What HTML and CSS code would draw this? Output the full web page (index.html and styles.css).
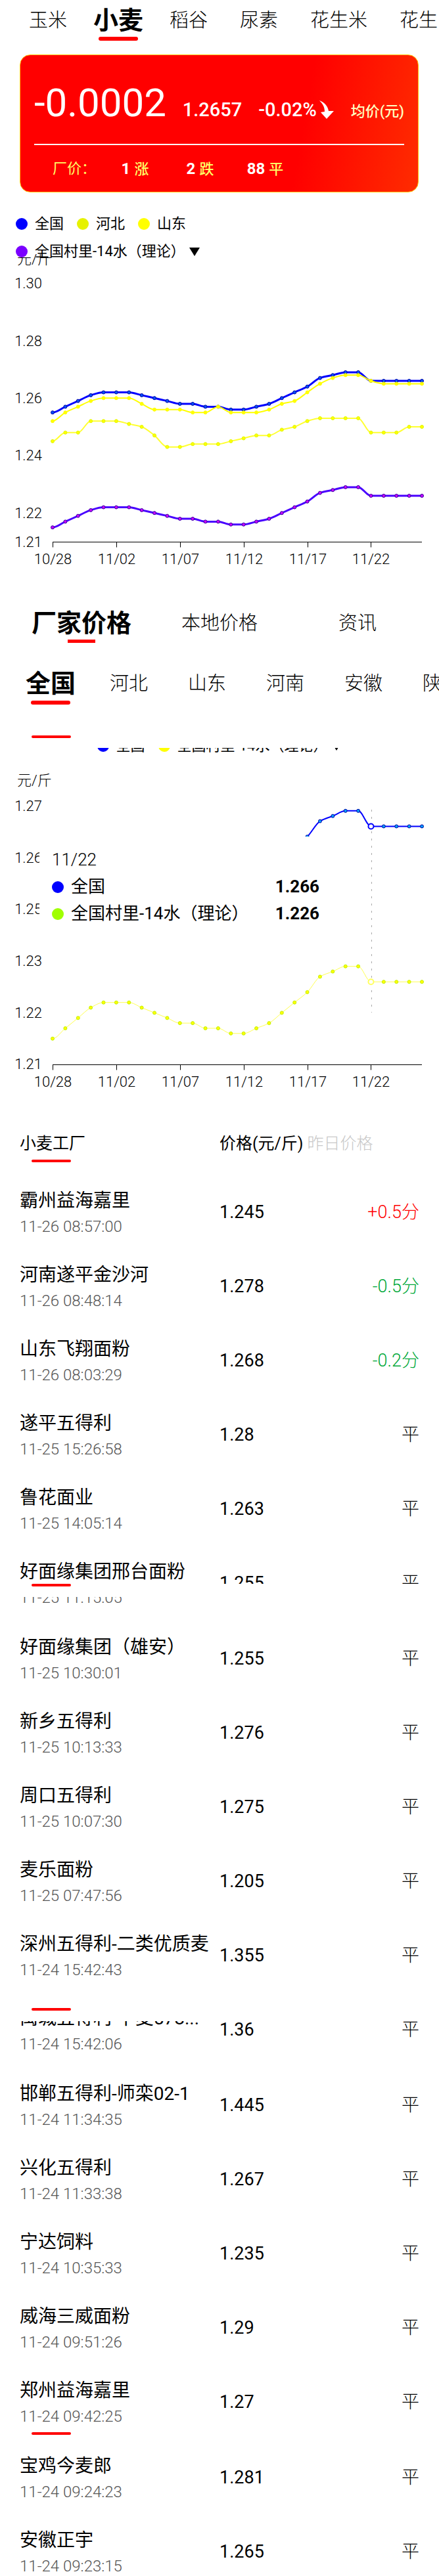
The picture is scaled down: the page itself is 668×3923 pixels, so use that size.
FILE: index.html
```
<!DOCTYPE html>
<html lang="zh-CN">
<head>
    <meta charset="UTF-8">
    <meta name="viewport" content="width=device-width, initial-scale=1.0">
    <title>小麦价格</title>
    <link rel="stylesheet" href="styles.css">
</head>
<body>
    <nav class="crops">
        <a href="#">玉米</a>
        <a href="#" class="active">小麦</a>
        <a href="#">稻谷</a>
        <a href="#">尿素</a>
        <a href="#">花生米</a>
        <a href="#">花生</a>
    </nav>

    <section class="card">
        <div class="card-main">
            <span class="change">-0.0002</span>
            <span class="figure">1.2657</span>
            <span class="figure">-0.02%<svg class="arrow" viewBox="0 0 24 28"><path d="M1 0C9 3 14 9 15 16L23 16L12 28L3 18L9 17C9 10 6 5 1 0Z" fill="#fff"/></svg></span>
            <span class="unit">均价(元)</span>
        </div>
        <div class="card-sub">
            <span class="label">厂价：</span>
            <span class="count"><b>1</b>涨</span>
            <span class="count"><b>2</b>跌</span>
            <span class="count"><b>88</b>平</span>
        </div>
    </section>

    <div class="legend">
        <div class="legend-row">
            <span class="key"><i class="dot blue"></i>全国</span>
            <span class="key"><i class="dot lemon"></i>河北</span>
            <span class="key"><i class="dot yellow"></i>山东</span>
        </div>
        <div class="legend-row">
            <span class="key"><i class="dot purple"></i>全国村里-14水（理论）</span>
            <span class="more"></span>
        </div>
    </div>
    <div class="chart chart-first">
        <svg id="chart1" viewBox="0 0 668 483"></svg>
    </div>

    <div class="tabs">
        <button type="button" class="active">厂家价格</button>
        <button type="button">本地价格</button>
        <button type="button">资讯</button>
    </div>

    <nav class="regions">
        <a href="#" class="active">全国</a>
        <a href="#">河北</a>
        <a href="#">山东</a>
        <a href="#">河南</a>
        <a href="#">安徽</a>
        <a href="#">陕西</a>
    </nav>
    <div class="bar bar-alone"></div>

    <div class="legend-strip">
        <div class="legend-row">
            <span class="key"><i class="dot blue"></i>全国</span>
            <span class="key"><i class="dot yellow"></i>全国村里-14水（理论）</span>
            <span class="more"></span>
        </div>
    </div>
    <div class="chart chart-second">
        <svg id="chart2" viewBox="0 0 668 500"></svg>
        <div class="tooltip">
            <div>11/22</div>
            <div class="tip-row"><i class="dot blue"></i>全国<b>1.266</b></div>
            <div class="tip-row"><i class="dot green"></i>全国村里-14水（理论）<b>1.226</b></div>
        </div>
    </div>

    <table class="prices">
        <thead>
            <tr>
                <th class="col-name">小麦工厂<div class="bar"></div></th>
                <th class="col-price">价格(元/斤)</th>
                <th class="col-change">昨日价格</th>
            </tr>
        </thead>
        <tbody>
            <tr><td>霸州益海嘉里<small>11-26 08:57:00</small></td><td>1.245</td><td class="up">+0.5分</td></tr>
            <tr><td>河南遂平金沙河<small>11-26 08:48:14</small></td><td>1.278</td><td class="down">-0.5分</td></tr>
            <tr><td>山东飞翔面粉<small>11-26 08:03:29</small></td><td>1.268</td><td class="down">-0.2分</td></tr>
            <tr><td>遂平五得利<small>11-25 15:26:58</small></td><td>1.28</td><td>平</td></tr>
            <tr><td>鲁花面业<small>11-25 14:05:14</small></td><td>1.263</td><td>平</td></tr>
            <tr class="page-break">
                <td>好面缘集团邢台面粉<small>11-25 11:15:05</small><div class="seam seam-middle"><div class="bar"></div></div></td>
                <td>1.255</td><td>平</td>
            </tr>
            <tr><td>好面缘集团（雄安）<small>11-25 10:30:01</small></td><td>1.255</td><td>平</td></tr>
            <tr><td>新乡五得利<small>11-25 10:13:33</small></td><td>1.276</td><td>平</td></tr>
            <tr><td>周口五得利<small>11-25 10:07:30</small></td><td>1.275</td><td>平</td></tr>
            <tr><td>麦乐面粉<small>11-25 07:47:56</small></td><td>1.205</td><td>平</td></tr>
            <tr><td>深州五得利-二类优质麦<small>11-24 15:42:43</small></td><td>1.355</td><td>平</td></tr>
            <tr class="page-break">
                <td>禹城五得利-中麦578...<small>11-24 15:42:06</small><div class="seam seam-top"><div class="bar"></div></div></td>
                <td>1.36</td><td>平</td>
            </tr>
            <tr><td>邯郸五得利-师栾02-1<small>11-24 11:34:35</small></td><td>1.445</td><td>平</td></tr>
            <tr><td>兴化五得利<small>11-24 11:33:38</small></td><td>1.267</td><td>平</td></tr>
            <tr><td>宁达饲料<small>11-24 10:35:33</small></td><td>1.235</td><td>平</td></tr>
            <tr><td>威海三威面粉<small>11-24 09:51:26</small></td><td>1.29</td><td>平</td></tr>
            <tr class="page-break">
                <td>郑州益海嘉里<small>11-24 09:42:25</small><div class="seam seam-bottom"><div class="bar"></div></div></td>
                <td>1.27</td><td>平</td>
            </tr>
            <tr><td>宝鸡今麦郎<small>11-24 09:24:23</small></td><td>1.281</td><td>平</td></tr>
            <tr class="last"><td>安徽正宇<small>11-24 09:23:15</small></td><td>1.265</td><td>平</td></tr>
        </tbody>
    </table>

    <script src="charts.js"></script>
</body>
</html>
```
FILE: styles.css
```
*{
    box-sizing: border-box;
}
body{
    margin: 0;
    background-color: #fff;
    color: #000;
    font-family: Roboto, "Noto Sans CJK SC", sans-serif;
    font-size: 22px;
    overflow-x: hidden;
}
a{
    color: #000;
    text-decoration: none;
}
.bar{
    width: 60px;
    height: 4px;
    border-radius: 2px;
    background-color: #ff0000;
}

/* top menu and region menu */
.crops, .regions{
    display: flex;
    overflow: hidden;
    white-space: nowrap;
    font-size: 29px;
    font-weight: 300;
}
.crops{
    gap: 49px;
    height: 62px;
    padding-left: 44px;
    line-height: 62px;
}
.regions{
    gap: 61px;
    height: 63px;
    margin-top: 31px;
    padding-left: 48px;
    line-height: 62px;
}
.crops a, .regions a, .tabs button{
    flex-shrink: 0;
    position: relative;
}
.crops .active, .regions .active, .tabs .active{
    font-size: 38px;
    font-weight: 700;
}
.crops .active, .regions .active{
    height: 100%;
    margin: 0 -9px;
}
.active::after{
    content: "";
    position: absolute;
    left: 50%;
    bottom: 0;
    width: 60px;
    height: 6px;
    margin-left: -30px;
    border-radius: 3px;
    background-color: #ff0000;
}

/* price card */
.card{
    height: 210px;
    margin: 21px 31px 0 30px;
    padding: 43px 21px 0;
    border: 1px solid #ffc400;
    border-radius: 16px;
    background: linear-gradient(100deg, #ff0000 70%, #ff2c00);
    color: #fff;
}
.card-main{
    display: flex;
    justify-content: space-between;
    align-items: baseline;
    padding-bottom: 19px;
    border-bottom: 2px solid #fff;
    line-height: 60px;
    white-space: nowrap;
}
.change{
    font-size: 60px;
}
.figure{
    font-size: 29px;
    font-weight: 500;
}
.arrow{
    width: 24px;
    height: 28px;
    margin-left: 3px;
    vertical-align: -4px;
}
.unit{
    font-weight: 500;
    color: #ffffc0;
}
.card-sub{
    display: flex;
    margin-top: 20px;
    padding-left: 28px;
    line-height: 32px;
    color: #ffff66;
}
.label{
    margin-right: 10px;
}
.count{
    width: 99px;
    text-align: center;
    font-weight: 500;
}
.count b{
    margin-right: 6px;
    font-size: 24px;
    color: #fff;
}

/* legends */
.legend{
    margin-top: 27px;
    padding-left: 24px;
}
.legend-row{
    display: flex;
    align-items: center;
    gap: 20px;
    line-height: 42px;
    white-space: nowrap;
}
.key{
    display: flex;
    align-items: center;
}
.dot{
    flex-shrink: 0;
    width: 18px;
    height: 18px;
    margin-right: 11px;
    border-radius: 50%;
}
.blue{ background-color: #0000ff; }
.lemon{ background-color: #e6f200; }
.yellow{ background-color: #ffff00; }
.green{ background-color: #a0ff00; }
.purple{ background-color: #7a00ff; }
.more{
    margin-left: -14px;
    border: 8px solid transparent;
    border-top: 13px solid #000;
    border-bottom: 0;
}
.legend-strip{
    display: flex;
    justify-content: center;
    align-items: flex-end;
    height: 18px;
    margin-top: 15px;
    overflow: hidden;
}

/* charts */
.chart{
    position: relative;
}
.chart svg{
    display: block;
    width: 100%;
    overflow: hidden;
}
.chart text{
    font-size: 22px;
    font-weight: 300;
}
.chart-first{
    margin-top: -17px;
}
.tooltip{
    position: absolute;
    top: 117px;
    left: 60px;
    width: 480px;
    padding: 15px 54px 0 19px;
    background-color: #fff;
    font-size: 26px;
    font-weight: 300;
    line-height: 41px;
}
.tip-row{
    display: flex;
    align-items: center;
    font-weight: 400;
}
.tip-row b{
    margin-left: auto;
}

/* tabs */
.tabs{
    display: grid;
    grid-template-columns: repeat(3, 1fr);
    margin-top: 48px;
    padding: 0 19px;
}
.tabs button{
    height: 61px;
    padding: 0;
    border: none;
    background: none;
    color: #000;
    font: 300 29px/60px Roboto, "Noto Sans CJK SC", sans-serif;
}
.tabs .active::after{
    width: 42px;
    height: 5px;
    margin-left: -21px;
    border-radius: 0;
}
.bar-alone{
    margin: 47px 0 0 48px;
}

/* price list */
.prices{
    width: 100%;
    margin-top: 38px;
    border-collapse: collapse;
    table-layout: fixed;
    font-size: 27px;
}
.prices tr{
    position: relative;
    height: 113px;
}
.prices thead tr{
    height: 94px;
}
.prices .page-break{
    height: 115px;
}
.prices .last{
    height: 94px;
}
.prices th{
    padding: 27px 0 0;
    font-size: 25px;
    font-weight: 400;
    line-height: 40px;
    text-align: left;
    vertical-align: top;
    white-space: nowrap;
}
.prices td{
    padding: 37px 0 0;
    line-height: 40px;
    vertical-align: top;
    white-space: nowrap;
}
.prices .col-name{
    width: 50%;
    padding-left: 30px;
}
.prices .col-price{
    width: 20%;
}
.prices .col-change{
    color: #c8c8c8;
    font-weight: 300;
}
th .bar{
    margin: 4px 0 0 18px;
}
.prices td:first-child{
    padding: 20px 0 0 30px;
    font-size: 28px;
}
.prices td:last-child{
    padding-right: 30px;
    text-align: right;
    font-weight: 300;
}
.prices small{
    display: block;
    font-size: 24px;
    font-weight: 300;
    line-height: 38px;
    color: #555;
}
.prices .up{
    color: #ff0000;
    font-weight: 400;
}
.prices .down{
    color: #00a838;
    font-weight: 400;
}

/* white strip with the menu bar that runs over a row */
.seam{
    position: absolute;
    left: 0;
    width: 100%;
    height: 20px;
    padding-left: 48px;
    background-color: #fff;
}
.seam-middle{
    top: 58px;
}
.seam-top{
    top: 24px;
}
.seam-bottom{
    top: 103px;
    height: 8px;
}
```
FILE: charts.js
```
var national = [1.255, 1.257, 1.259, 1.261, 1.262, 1.262, 1.262, 1.261, 1.260, 1.259, 1.258, 1.258, 1.257, 1.257, 1.256,
    1.256, 1.257, 1.258, 1.260, 1.262, 1.264, 1.267, 1.268, 1.269, 1.269, 1.266, 1.266, 1.266, 1.266, 1.266];
var shandong = [1.252, 1.255, 1.257, 1.259, 1.260, 1.260, 1.260, 1.258, 1.256, 1.256, 1.256, 1.255, 1.255, 1.257, 1.255,
    1.255, 1.255, 1.256, 1.258, 1.259, 1.262, 1.265, 1.267, 1.268, 1.268, 1.266, 1.265, 1.265, 1.265, 1.265];
var hebei = [1.245, 1.248, 1.248, 1.252, 1.252, 1.252, 1.251, 1.250, 1.247, 1.243, 1.243, 1.244, 1.244, 1.244, 1.245,
    1.246, 1.247, 1.247, 1.249, 1.250, 1.252, 1.253, 1.253, 1.253, 1.253, 1.248, 1.248, 1.248, 1.250, 1.250];
// village price is always 4 fen below the national one
var village = national.map(function(v){ return v - 0.04; });

var LEFT = 80;
var RIGHT = 642;
var STEP = (RIGHT - LEFT) / 29;

function add(svg, name, attrs, text){
    var el = document.createElementNS('http://www.w3.org/2000/svg', name);
    for(var key in attrs){
        el.setAttribute(key, attrs[key]);
    }
    if(text){
        el.textContent = text;
    }
    svg.appendChild(el);
}

// smooth line that never goes past its points
function linePath(pts){
    var slopes = pts.map(function(p, i){
        if(i === 0 || i === pts.length - 1){
            return 0;
        }
        var a = (p[1] - pts[i - 1][1]) / STEP;
        var b = (pts[i + 1][1] - p[1]) / STEP;
        return a * b <= 0 ? 0 : 2 * a * b / (a + b);
    });
    var d = 'M' + pts[0];
    for(var i = 1; i < pts.length; i++){
        var h = STEP / 3;
        d += 'C' + [pts[i - 1][0] + h, pts[i - 1][1] + slopes[i - 1] * h,
            pts[i][0] - h, pts[i][1] - slopes[i] * h, pts[i][0], pts[i][1]];
    }
    return d;
}

function drawLine(svg, data, toY, line, width, dot, edge){
    var pts = data.map(function(v, i){
        return [LEFT + i * STEP, toY(v)];
    });
    add(svg, 'path', {d: linePath(pts), fill: 'none', stroke: line, 'stroke-width': width});
    pts.forEach(function(p){
        add(svg, 'circle', {cx: p[0], cy: p[1], r: 2.5, fill: dot, stroke: edge, 'stroke-width': 1});
    });
}

function drawAxis(svg, bottom, unitY, labels){
    add(svg, 'text', {x: 26, y: unitY}, '元/斤');
    labels.forEach(function(l){
        add(svg, 'text', {x: 64, y: l[1] + 8, 'text-anchor': 'end'}, l[0]);
    });
    add(svg, 'path', {d: 'M' + LEFT + ' ' + bottom + 'H' + RIGHT, stroke: '#000', 'stroke-width': 1});
    ['10/28', '11/02', '11/07', '11/12', '11/17', '11/22'].forEach(function(day, i){
        var x = Math.round(LEFT + i * 5 * STEP) + 0.5;
        add(svg, 'path', {d: 'M' + x + ' ' + bottom + 'v8', stroke: '#000', 'stroke-width': 1});
        add(svg, 'text', {x: x, y: bottom + 33, 'text-anchor': 'middle'}, day);
    });
}

var chart1 = document.getElementById('chart1');
function y1(v){
    return 438 - (v - 1.21) * 4375;
}
drawAxis(chart1, 438.5, 15, [['1.30', 44], ['1.28', 132], ['1.26', 219], ['1.24', 306], ['1.22', 394], ['1.21', 438]]);
drawLine(chart1, national, y1, '#0000ff', 3, '#0050ff', '#0000a0');
drawLine(chart1, hebei, y1, '#ffff30', 2, '#ffff00', '#e0f800');
drawLine(chart1, shandong, y1, '#ffff00', 2, '#ffff00', '#ffff00');
drawLine(chart1, village, y1, '#4800ff', 3, '#c800ff', '#3000a0');

var chart2 = document.getElementById('chart2');
// the two lines stand on separate parts of the broken scale
function yHigh(v){
    return 70 + (1.27 - v) * 7860;
}
function yLow(v){
    return 464 - (v - 1.21) * 7860;
}
drawAxis(chart2, 464.5, 39, [['1.27', 70], ['1.26', 149], ['1.25', 227], ['1.23', 306], ['1.22', 385], ['1.21', 463]]);
add(chart2, 'path', {d: 'M565.5 76V385', stroke: '#aaa', 'stroke-width': 1, 'stroke-dasharray': '3 8'});
drawLine(chart2, national, yHigh, '#0000ff', 2, '#00a0ff', '#0000a0');
drawLine(chart2, village, yLow, '#ffff50', 1, '#ffff00', '#c0f000');
add(chart2, 'circle', {cx: LEFT + 25 * STEP, cy: yHigh(1.266), r: 4, fill: '#fff', stroke: '#0000ff', 'stroke-width': 2});
add(chart2, 'circle', {cx: LEFT + 25 * STEP, cy: yLow(1.226), r: 4, fill: '#fff', stroke: '#ffff60', 'stroke-width': 2});
```
